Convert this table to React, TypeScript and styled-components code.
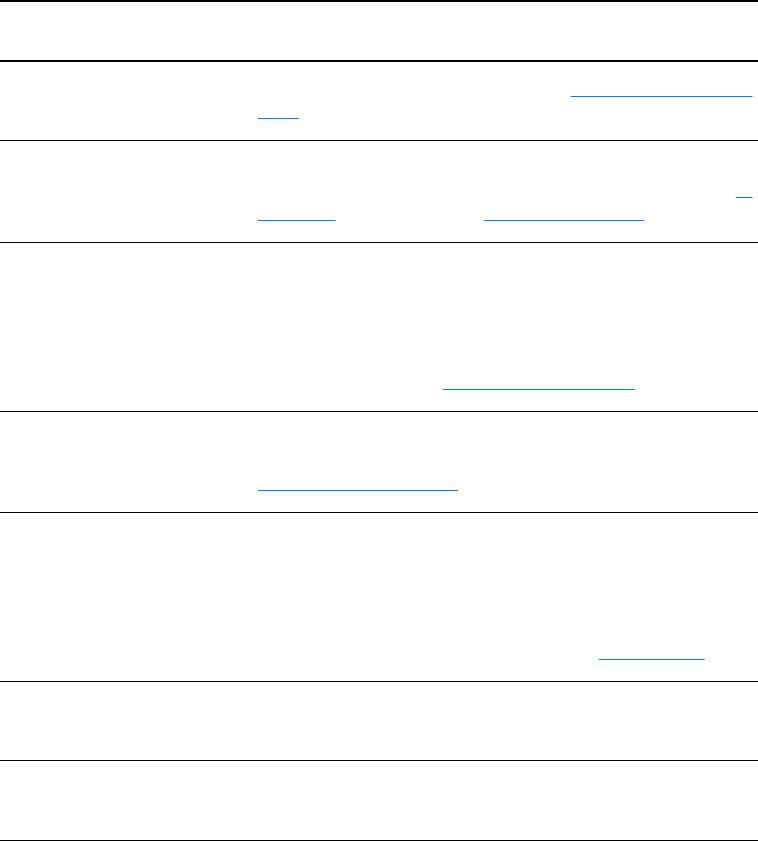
import styled, { createGlobalStyle } from 'styled-components';

const GlobalStyle = createGlobalStyle`
	body {
		margin: 0;
		background: #ffffff;
		font-family: "Liberation Sans", Arial, sans-serif;
	}
`;

type Part = string | { link: string };

const rows: { name: string; desc: Part[] }[] = [
	{
		name: 'align',
		desc: [
			'Sets the horizontal alignment inside a cell, see ',
			{ link: 'the text alignment overview pages' },
			' for all accepted values.',
		],
	},
	{
		name: 'background',
		desc: [
			'Defines the fill colour drawn behind the content of the element. Accepts any colour value, and also the keyword transparent or inherit. First read ',
			{ link: 'an online chart' },
			' before choosing, and ',
			{ link: 'colour contrast checklist' },
			' as well.',
		],
	},
	{
		name: 'border',
		desc: [
			'Draws a line around the edge of the element. The width, style and colour may be given together in one value or set one by one with the longhand properties. When the table uses collapsed borders, adjacent cells share a single line and the wider of the two wins. Lines drawn on rows and on cells are merged into one, and when two lines have the same width the style of the cell is used, as noted in ',
			{ link: 'these border collapsing rules' },
			'.',
		],
	},
	{
		name: 'padding',
		desc: [
			'Adds space between the content and the border of the element. Negative values are not allowed, and percentages refer to the parent width; see the ',
			{ link: 'illustrated box model overview' },
			'.',
		],
	},
	{
		name: 'vertical-align',
		desc: [
			'Controls where the content sits inside the height of the cell. The value top places it against the upper edge, middle centres it, and bottom places it against the lower edge. The value baseline lines up the first line of text in every cell of the row, which is the default for table cells. Other keywords, such as sub, super and text-top, only apply to inline boxes and have no effect at all when set on table cells, as explained in ',
			{ link: 'inline formatting' },
			'.',
		],
	},
	{
		name: 'white-space',
		desc: [
			'Decides whether spaces and line breaks in the source are kept, and whether long lines are allowed to wrap at the end of the cell.',
		],
	},
	{
		name: 'width',
		desc: [
			'Gives the preferred width of the column. The browser may still widen it when the content cannot fit.',
		],
	},
];

function App() {
	return (
		<>
			<GlobalStyle />
			<Table>
				<thead>
					<tr>
						<HeaderCell>Property</HeaderCell>
						<HeaderCell>Description</HeaderCell>
					</tr>
				</thead>
				<tbody>
					{rows.map((row) => (
						<Row key={row.name}>
							<NameCell>{row.name}</NameCell>
							<DescCell>
								{row.desc.map((part, i) =>
									typeof part === 'string' ? part : (
										<Link key={i} href="#">
											{part.link}
										</Link>
									),
								)}
							</DescCell>
						</Row>
					))}
				</tbody>
			</Table>
		</>
	);
}

export default App;

const Table = styled.table`
	width: 100%;
	border-collapse: collapse;
	border-top: 2px solid #000000;
	color: #ffffff;
	font-size: 15px;
	line-height: 22.5px;
`;

const HeaderCell = styled.th`
	padding: 17px 4px 17px 8px;
	text-align: left;
	line-height: 24px;
	border-bottom: 2px solid #000000;
`;

const Row = styled.tr`
	border-bottom: 1px solid #000000;

	&:last-child td {
		padding-bottom: 17.5px;
	}
`;

const NameCell = styled.td`
	width: 234px;
	padding: 16.5px 8px;
	vertical-align: top;
`;

const DescCell = styled.td`
	padding: 16.5px 4px 16.5px 8px;
	vertical-align: top;
`;

const Link = styled.a`
	color: transparent;
	text-decoration: underline;
	text-decoration-color: #0a7ff5;
	text-decoration-thickness: 1px;
	text-decoration-skip-ink: none;
`;
